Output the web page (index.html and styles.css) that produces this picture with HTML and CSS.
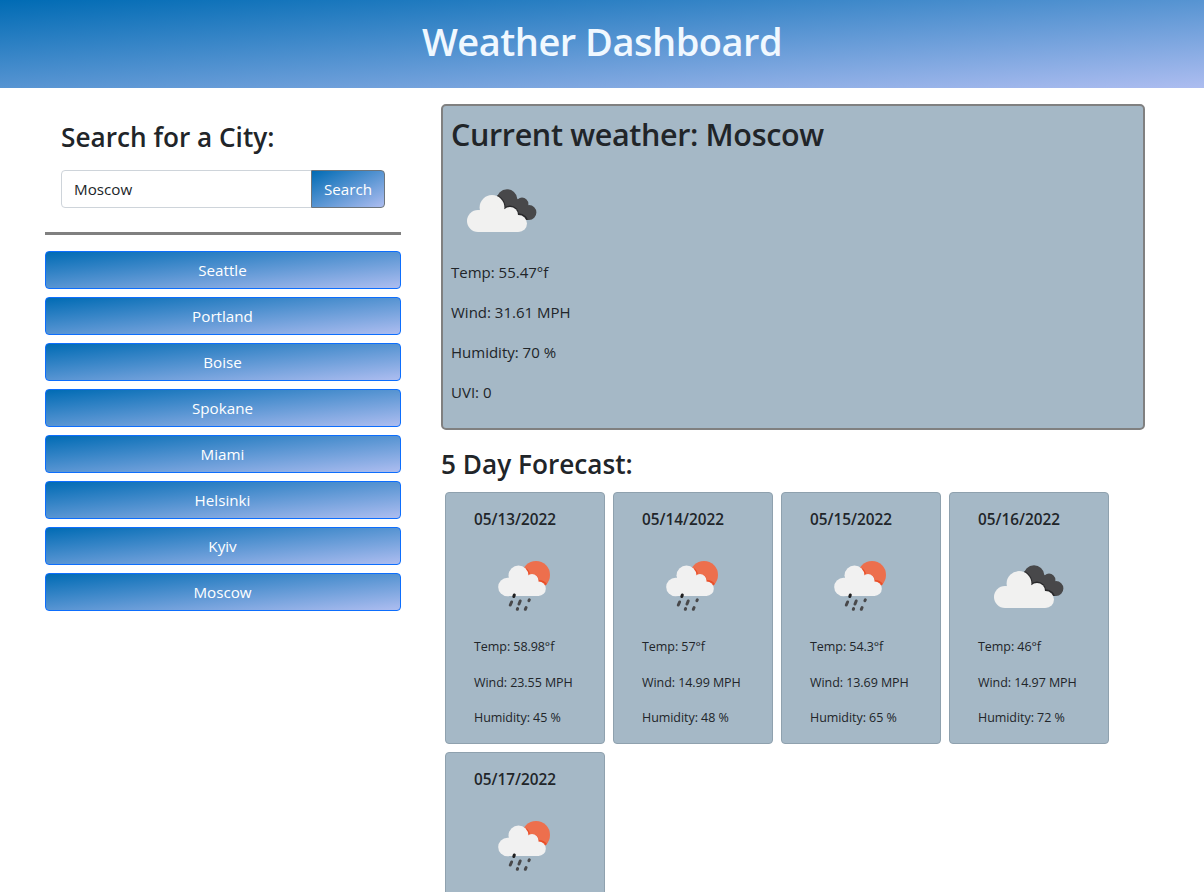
FILE: index.html
```html
<!DOCTYPE html>
<html lang="en">
<head>
<meta charset="utf-8">
<title>Weather Dashboard</title>
<link rel="stylesheet" href="styles.css">
</head>
<body>
<svg class="sprite" aria-hidden="true">
  <defs>
    <clipPath id="back-cloud"><circle cx="56" cy="38.500" r="10.300"/><circle cx="71" cy="43" r="6.400"/><circle cx="78" cy="51.500" r="7.400"/><path d="M50 45 60 33 72 42 78 59H70z"/></clipPath>
  </defs>
  <symbol id="clouds" viewBox="0 0 100 100">
    <g clip-path="url(#back-cloud)">
      <path fill="#48484a" d="M30 20H90V70H30z"/>
      <g fill="#28282a"><circle cx="41" cy="46.500" r="13.500"/><circle cx="59" cy="53.500" r="9"/><circle cx="67.500" cy="62" r="9.800"/></g>
    </g>
    <g fill="#f1f1f0"><circle cx="27" cy="60" r="11"/><circle cx="41" cy="46.500" r="12.400"/><circle cx="59" cy="54" r="8"/><circle cx="67.500" cy="62.500" r="8.500"/><path d="M27 49.500 50 46 67 58V71H27z"/></g>
  </symbol>
  <symbol id="rain" viewBox="0 0 100 100">
    <circle cx="62" cy="38" r="14" fill="#ed6f4d"/>
    <path fill="#e94e28" d="M52 31Q56 34 56 38 63 36 65 43 70 43 73 47L66 52 50 42z"/>
    <g fill="#f1f1f1"><circle cx="33.500" cy="50" r="9.300"/><circle cx="44.500" cy="38.500" r="10"/><circle cx="58" cy="43.500" r="6.500"/><circle cx="64.500" cy="51.700" r="7.300"/><path d="M33 41 52 39 65 45V59H33z"/></g>
    <g stroke="#48484a" stroke-width="3" stroke-linecap="round"><path d="M40.300 58 39.800 59.500" stroke="#1f1f20"/><path d="M37.600 65 36.300 68M46.200 64 45 67M55.300 62.800 54.900 63.600M43.600 71.600 43.300 72.300M52.100 70.500 51.300 72.300"/></g>
  </symbol>
</svg>
<header class="banner"><h1 class="title">Weather Dashboard</h1></header>
<main class="layout">
  <aside class="sidebar">
    <form class="search">
      <h3 class="heading heading-search">Search for a City:</h3>
      <div class="input-group">
        <input class="city-input" type="text" value="Moscow" aria-label="City">
        <button class="search-btn" type="button"><span>Search</span></button>
      </div>
    </form>
    <div class="history">
      <button class="city-btn">Seattle</button>
      <button class="city-btn">Portland</button>
      <button class="city-btn">Boise</button>
      <button class="city-btn">Spokane</button>
      <button class="city-btn">Miami</button>
      <button class="city-btn">Helsinki</button>
      <button class="city-btn">Kyiv</button>
      <button class="city-btn">Moscow</button>
    </div>
  </aside>
  <div class="content">
    <section class="current">
      <h2 class="current-title">Current weather: Moscow</h2>
      <svg class="icon"><use href="#clouds"/></svg>
      <p>Temp: 55.47°f</p>
      <p>Wind: 31.61 MPH</p>
      <p>Humidity: 70 %</p>
      <p>UVI: 0</p>
    </section>
    <h3 class="heading heading-forecast">5 Day Forecast:</h3>
    <div class="forecast">
      <article class="card"><h5 class="date">05/13/2022</h5><svg class="icon"><use href="#rain"/></svg><p>Temp: 58.98°f</p><p>Wind: 23.55 MPH</p><p>Humidity: 45 %</p></article>
      <article class="card"><h5 class="date">05/14/2022</h5><svg class="icon"><use href="#rain"/></svg><p>Temp: 57°f</p><p>Wind: 14.99 MPH</p><p>Humidity: 48 %</p></article>
      <article class="card"><h5 class="date">05/15/2022</h5><svg class="icon"><use href="#rain"/></svg><p>Temp: 54.3°f</p><p>Wind: 13.69 MPH</p><p>Humidity: 65 %</p></article>
      <article class="card"><h5 class="date">05/16/2022</h5><svg class="icon"><use href="#clouds"/></svg><p>Temp: 46°f</p><p>Wind: 14.97 MPH</p><p>Humidity: 72 %</p></article>
      <article class="card"><h5 class="date">05/17/2022</h5><svg class="icon"><use href="#rain"/></svg></article>
    </div>
  </div>
</main>
</body>
</html>
```
FILE: styles.css
```css
* { box-sizing: border-box; }
html, body { height: 100%; }
body {
  margin: 0;
  overflow: hidden;
  background: #fff;
  color: #212529;
  font: 400 16px/24px "Open Sans", "Noto Sans", sans-serif;
}
h1, h2, h3, h5, p { margin: 0; white-space: nowrap; }
.sprite { display: block; width: 0; height: 0; }
.banner, .search-btn, .city-btn { background-image: linear-gradient(to bottom right, #006bb4, #adbdf0); }
.banner { height: 88px; padding-top: 17px; text-align: center; }
.title { color: #f0f8ff; font-size: 38px; line-height: 48px; font-weight: 600; letter-spacing: -0.5px; }
.layout { display: flex; height: 804px; padding: 16px 59px 0 45px; gap: 40px; overflow: hidden; }
.sidebar { width: 356px; flex: none; align-self: flex-start; }
.search { padding: 16px 16px 24px; border-bottom: 3px solid #808080; }
.heading { font-size: 26.2px; line-height: 34px; font-weight: 600; }
.heading-search { margin-bottom: 16px; }
.input-group { display: flex; }
.city-input, .search-btn, .city-btn { height: 38px; font: inherit; font-size: 15.2px; }
.city-input {
  width: 251px; margin-right: -1px; padding: 6px 12px; color: #212529;
  border: 1px solid #ced4da; border-radius: 4px 0 0 4px; background: #fff;
}
.search-btn { width: 74px; padding: 0; color: #fff; border: 1px solid #6c757d; border-radius: 0 4px 4px 0; }
.history { display: grid; gap: 8px; padding-top: 16px; }
.city-btn { padding: 0 1px 1px 0; color: #fff; border: 1px solid #0d6efd; border-radius: 4px; }
.content { flex: 1; min-width: 0; }
.current {
  height: 326px; padding: 9px 8px; border: 2px solid #808080; border-radius: 5px; background: #a5b8c6;
  font-size: 15px;
}
.current-title { font-size: 30.5px; line-height: 38px; font-weight: 600; letter-spacing: -0.35px; }
.icon { display: block; width: 100px; height: 100px; }
.current .icon { margin: 8px 0 -1px; }
.current p { margin-bottom: 16px; }
.heading-forecast { margin: 17px 0 11px; }
.forecast { display: flex; flex-wrap: wrap; gap: 8px; padding-left: 4px; }
.card {
  width: 160px; height: 252px; padding: 16px 0 0 28px;
  border: 1px solid #8fa1ae; border-radius: 4px; background: #a5b8c6;
  font-size: 12.5px; line-height: 20px; letter-spacing: -0.06px;
}
.date { font-size: 15.3px; line-height: 20px; font-weight: 600; letter-spacing: 0; margin-bottom: 8px; }
.card p { margin-bottom: 15.500px; }
```
